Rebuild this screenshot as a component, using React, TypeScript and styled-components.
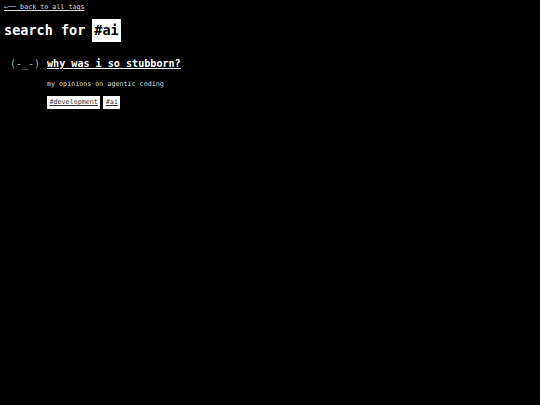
import styled, { createGlobalStyle } from "styled-components";

const Global = createGlobalStyle`
  html, body {
    margin: 0;
    background: #000;
    color: #fff;
    font-family: "DejaVu Sans Mono", "Liberation Mono", monospace;
  }
`;

const Page = styled.main`
  display: flex;
  flex-direction: column;
  align-items: flex-start;
  padding: 3px 4px;
`;

const BackLink = styled.a`
  color: #ddd;
  font-size: 6.7px;
  line-height: 9px;
  text-decoration: underline;
`;

const Heading = styled.h1`
  display: flex;
  align-items: center;
  gap: 7px;
  margin: 7px 0 0;
  font-size: 13.5px;
  font-weight: 700;
  line-height: 23px;
`;

const TagHighlight = styled.span`
  background: #fff;
  color: #000;
  padding: 0 2px;
`;

const Post = styled.article`
  display: grid;
  grid-template-columns: 31px 1fr;
  column-gap: 6px;
  margin-top: 14px;
  padding-left: 6px;
`;

const Face = styled.span`
  color: #b0b0b0;
  font-size: 10px;
  line-height: 16px;
  white-space: pre;
`;

const Body = styled.div`
  display: flex;
  flex-direction: column;
  align-items: flex-start;
`;

const Title = styled.a`
  color: #fff;
  font-size: 10.1px;
  font-weight: 700;
  line-height: 16px;
  text-decoration: underline;
`;

const Description = styled.p`
  margin: 8px 0 0;
  color: #ddd;
  font-size: 6.7px;
  line-height: 9px;
`;

const Tags = styled.div`
  display: flex;
  gap: 3px;
  margin-top: 7px;
`;

const Tag = styled.a`
  background: #fff;
  color: #333;
  font-size: 6.7px;
  line-height: 13px;
  padding: 0 2.5px;
  text-decoration: underline;
`;

export default function App() {
  return (
    <>
      <Global />
      <Page>
        <BackLink href="#">←── back to all tags</BackLink>
        <Heading>
          search for <TagHighlight>#ai</TagHighlight>
        </Heading>
        <Post>
          <Face>(-_-)</Face>
          <Body>
            <Title href="#">why was i so stubborn?</Title>
            <Description>my opinions on agentic coding</Description>
            <Tags>
              <Tag href="#">#development</Tag>
              <Tag href="#">#ai</Tag>
            </Tags>
          </Body>
        </Post>
      </Page>
    </>
  );
}
